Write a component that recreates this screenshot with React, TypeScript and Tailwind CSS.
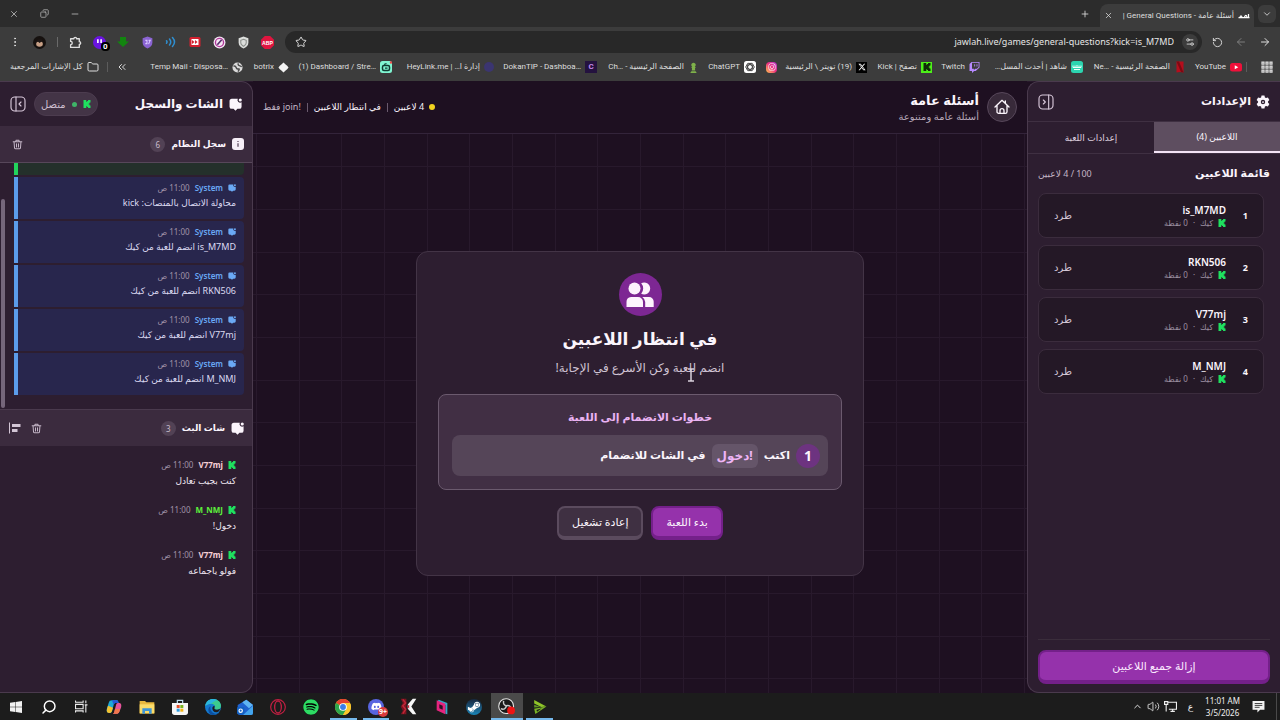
import React from 'react';
import {
  ArrowLeft,
  ArrowRight,
  ChevronDown,
  ChevronUp,
  ChevronsLeft,
  Copy,
  EllipsisVertical,
  Folder,
  Minus,
  Plus,
  RotateCcw,
  Search,
  Settings2,
  Star,
  Volume2,
  X,
} from 'lucide-react';
import { FaDiscord, FaInstagram, FaSpotify, FaSteamSymbol, FaTwitch, FaXTwitter, FaChessPawn } from 'react-icons/fa6';

type IconProps = { className?: string };

const KickIcon = ({ className = 'size-2 text-[#1fe05f]' }: IconProps) => (
  <svg viewBox="0 0 16 16" className={`shrink-0 ${className}`} fill="currentColor" aria-hidden="true">
    <path d="M1 0h5.500v3.500h1.700V1.800h1.900V0H15v5h-1.800v1.800h-1.700v2.400h1.700V11H15v5h-4.900v-1.800H8.200v-1.700H6.500V16H1z" />
  </svg>
);

const ChatIcon = ({ className = 'size-[13px]' }: IconProps) => (
  <svg viewBox="0 0 24 24" className={`shrink-0 ${className}`} fill="currentColor" aria-hidden="true">
    <path d="M6 1.500h10.200a5 5 0 0 0 7 6.500V16a4 4 0 0 1-4 4h-3.600L12 23.600 8.400 20H5a4 4 0 0 1-4-4V5.500a4 4 0 0 1 5-4z" />
    <circle cx="20.800" cy="3.600" r="2.900" />
  </svg>
);

const TrashIcon = ({ className = 'size-[11px]' }: IconProps) => (
  <svg viewBox="0 0 24 24" className={`shrink-0 ${className}`} fill="none" stroke="currentColor" strokeWidth="2.200" strokeLinecap="round" aria-hidden="true">
    <path d="M2.500 6h19M8 5.500 9.200 2.500h5.600L16 5.500M4.500 6.500l1 13a2.500 2.500 0 0 0 2.500 2h8a2.500 2.500 0 0 0 2.500-2l1-13M9.800 10.500v7M14.200 10.500v7" />
  </svg>
);

const PanelIcon = ({ open }: { open: 'left' | 'right' }) => (
  <svg viewBox="0 0 24 24" className="size-4" fill="none" stroke="currentColor" strokeWidth="1.700" strokeLinecap="round" strokeLinejoin="round" aria-hidden="true">
    <rect x="1.500" y="1.500" width="21" height="21" rx="5.500" />
    {open === 'right' ? <path d="M16 1.500v21M8 9l3 3-3 3" /> : <path d="M9 1.500v21M16.500 9l-3 3 3 3" />}
  </svg>
);

const GearIcon = () => (
  <svg viewBox="0 0 24 24" className="size-[14px]" fill="currentColor" fillRule="evenodd" aria-hidden="true">
    <path d="M9.500 1h5l.8 3.200 1.900 1.100 3.200-.9 2.500 4.300L20.500 11v2l2.400 2.300-2.500 4.300-3.200-.9-1.900 1.100-.8 3.200h-5l-.8-3.200-1.900-1.100-3.200.9-2.500-4.300L3.500 13v-2L1.100 8.700l2.500-4.300 3.200.9 1.900-1.100zM12 8.200a3.800 3.800 0 1 0 0 7.600 3.800 3.800 0 0 0 0-7.600z" />
    <circle cx="12" cy="12" r="1.500" />
  </svg>
);

const HomeIcon = () => (
  <svg viewBox="0 0 24 24" className="size-4" fill="none" stroke="currentColor" strokeWidth="2" strokeLinecap="round" strokeLinejoin="round" aria-hidden="true">
    <path d="M1.500 12 12 2l10.500 10M4.500 9.500V19A2.500 2.500 0 0 0 7 21.500h10a2.500 2.500 0 0 0 2.500-2.500V9.500M17 3v3M9 21v-3.500a3 3 0 0 1 6 0V21" />
  </svg>
);

const UsersIcon = () => (
  <svg viewBox="0 0 28 26" className="h-[26px] w-7" fill="#fdf3fd" aria-hidden="true">
    <circle cx="8.500" cy="6.500" r="6" />
    <path d="M15.200 1.300a6 6 0 1 1 0 10.400 7.800 7.800 0 0 0 0-10.400z" />
    <path d="M5 15h7a5 5 0 0 1 5 5v5H.5v-5A5 5 0 0 1 5 15zM16.300 15H23a4.700 4.700 0 0 1 4.700 5v5h-8.500v-5a7 7 0 0 0-2.900-5z" />
  </svg>
);

const extensions = [
  {
    name: 'ABP',
    icon: (
      <svg viewBox="0 0 24 24" className="size-[13px]">
        <path d="M7 0h10l7 7v10l-7 7H7l-7-7V7z" fill="#e0153f" />
        <text x="12" y="16" textAnchor="middle" fontSize="9.500" fontWeight="700" fill="#fff" fontFamily="Liberation Sans">ABP</text>
      </svg>
    ),
  },
  {
    name: 'Shield',
    icon: (
      <svg viewBox="0 0 24 24" className="size-[13px]">
        <path d="M12 1l9 3v8c0 6-4 9-9 11-5-2-9-5-9-11V4z" fill="#dcdedc" />
        <path d="M12 6l5 2v5c0 3-2 4-5 6-3-2-5-3-5-6V8z" fill="none" stroke="#8b8f8b" strokeWidth="2" />
      </svg>
    ),
  },
  {
    name: 'Blocker',
    icon: (
      <svg viewBox="0 0 24 24" className="size-[13px]">
        <circle cx="12" cy="12" r="11" fill="#f4e6f4" />
        <circle cx="12" cy="12" r="7.500" fill="none" stroke="#b03a9a" strokeWidth="2.500" />
        <path d="M8 16l8-9" stroke="#53306b" strokeWidth="3" />
      </svg>
    ),
  },
  {
    name: 'Speed',
    icon: (
      <svg viewBox="0 0 24 24" className="size-[12px]">
        <rect x="1" y="2" width="22" height="20" rx="3" fill="#d3202f" />
        <path d="M5 6h14v12H5z" fill="#fff" />
        <path d="M6 8l5 4-5 4zM12 8l5 4-5 4z" fill="#d3202f" />
      </svg>
    ),
  },
  {
    name: 'Sound',
    icon: (
      <svg viewBox="0 0 24 24" className="size-[12px]" fill="none" stroke="#2f8fd0" strokeWidth="3" strokeLinecap="round">
        <path d="M3 9.500q2 2.500 0 5M9 6q5 6 0 12M15 3q8 9 0 18" />
      </svg>
    ),
  },
  {
    name: 'Privacy',
    icon: (
      <svg viewBox="0 0 24 24" className="size-[13px]">
        <path d="M12 1l9 3v8c0 6-4 9-9 11-5-2-9-5-9-11V4z" fill="#8a63d2" />
        <path d="M8 8h3v6H8M14 8h3l-3 7" fill="none" stroke="#d9c9ff" strokeWidth="2" />
      </svg>
    ),
  },
  {
    name: 'Downloader',
    icon: (
      <svg viewBox="0 0 24 24" className="size-[12px]" fill="#12850f">
        <path d="M6 2h12v9h6L12 22 0 11h6z" />
      </svg>
    ),
  },
  {
    name: 'Twitch tools',
    icon: (
      <span className="relative flex">
        <svg viewBox="0 0 24 24" className="size-[13px]">
          <circle cx="12" cy="12" r="12" fill="#6a14e0" />
          <path d="M9 6v7M15 6v7" stroke="#fff" strokeWidth="3" />
        </svg>
        <span className="absolute -right-1 top-1.5 rounded-sm bg-black px-[2px] text-[8px] leading-[9px] font-bold text-white">0</span>
      </span>
    ),
  },
  {
    name: 'Extensions',
    icon: (
      <svg viewBox="0 0 24 24" className="size-[13px]" fill="none" stroke="currentColor" strokeWidth="2.500" strokeLinejoin="round">
        <path d="M3 5h6a2.500 2.500 0 0 1 5 0h5v5.500a2.500 2.500 0 0 1 0 5V21H3v-5a3 3 0 0 0 0-6z" />
      </svg>
    ),
  },
];

const bookmarks = [
  {
    label: 'YouTube',
    dir: 'ltr',
    width: 'w-[48px]',
    icon: (
      <svg viewBox="0 0 24 24" className="size-3">
        <rect x="0" y="4" width="24" height="17" rx="5" fill="#f0103a" />
        <path d="M9.500 8.500l7 4-7 4z" fill="#fff" />
      </svg>
    ),
  },
  {
    label: 'الصفحة الرئيسية - Ne…\u200e',
    dir: 'rtl',
    width: 'w-[95px]',
    icon: (
      <svg viewBox="0 0 24 24" className="size-3">
        <path d="M5 1h14v22l-7-1-7 1z" fill="#b50d1c" />
        <path d="M5 1h5l9 22-5-1z" fill="#7d0912" />
      </svg>
    ),
  },
  {
    label: 'شاهد | أحدث المسل…',
    dir: 'rtl',
    width: 'w-[95px]',
    icon: (
      <svg viewBox="0 0 24 24" className="size-3">
        <rect width="24" height="24" rx="5" fill="#2cd5b0" />
        <path d="M4 9v4h16V9M8 9v4M12 8v5M16 9v4M6 17h12" fill="none" stroke="#eafff8" strokeWidth="2" />
      </svg>
    ),
  },
  { label: 'Twitch', dir: 'ltr', width: 'w-[40px]', icon: <FaTwitch className="size-[11px] text-[#b78aff]" /> },
  {
    label: 'تصفح | Kick',
    dir: 'rtl',
    width: 'w-[57px]',
    icon: (
      <span className="flex size-[11px] items-center justify-center bg-[#4df019]">
        <KickIcon className="size-2 text-[#102a08]" />
      </span>
    ),
  },
  {
    label: '(19) تويتر \\ الرئيسية',
    dir: 'rtl',
    width: 'w-[82px]',
    icon: (
      <span className="flex size-[11px] items-center justify-center bg-black">
        <FaXTwitter className="size-2 text-white" />
      </span>
    ),
  },
  {
    label: '',
    dir: 'ltr',
    width: 'w-[13px]',
    icon: (
      <span className="flex size-[11px] items-center justify-center rounded-sm bg-linear-to-tr from-[#fdbf3b] via-[#ee2a7b] to-[#b42bd0]">
        <FaInstagram className="size-2 text-white" />
      </span>
    ),
  },
  {
    label: 'ChatGPT',
    dir: 'ltr',
    width: 'w-[49px]',
    icon: (
      <svg viewBox="0 0 24 24" className="size-3">
        <rect width="24" height="24" rx="5" fill="#fff" />
        <g fill="none" stroke="#222" strokeWidth="1.500">
          <ellipse cx="12" cy="12" rx="8.500" ry="4.500" />
          <ellipse cx="12" cy="12" rx="8.500" ry="4.500" transform="rotate(60 12 12)" />
          <ellipse cx="12" cy="12" rx="8.500" ry="4.500" transform="rotate(120 12 12)" />
        </g>
      </svg>
    ),
  },
  {
    label: 'الصفحة الرئيسية - Ch…\u200e',
    dir: 'rtl',
    width: 'w-[94px]',
    icon: <FaChessPawn className="size-[11px] text-[#7fb24a]" />,
  },
  {
    label: 'DokanTIP - Dashboa…',
    dir: 'ltr',
    width: 'w-[95px]',
    icon: (
      <span className="flex size-3 items-center justify-center bg-[#24123f] text-[8px] leading-none font-bold text-[#c68bf0]">C</span>
    ),
  },
  {
    label: 'HeyLink.me | إدارة ا…\u200f',
    dir: 'ltr',
    width: 'w-[94px]',
    icon: <span className="size-[10px] rounded-full bg-[#3b3570]" />,
  },
  {
    label: '(1) Dashboard / Stre…',
    dir: 'ltr',
    width: 'w-[95px]',
    icon: (
      <svg viewBox="0 0 24 24" className="size-3">
        <rect width="24" height="24" rx="5" fill="#80f5d2" />
        <rect x="5" y="9" width="14" height="10" rx="3" fill="none" stroke="#0f3d33" strokeWidth="3" />
        <path d="M8 7l5-2M10 14h5" stroke="#0f3d33" strokeWidth="2.500" />
        <circle cx="22" cy="3" r="2.500" fill="#f04a4a" />
      </svg>
    ),
  },
  {
    label: 'botrix',
    dir: 'ltr',
    width: 'w-[38px]',
    icon: (
      <svg viewBox="0 0 24 24" className="size-[11px]" fill="#f4f4f4">
        <path d="M12 1l4 4 4 3 3 4-3 4-4 3-4 4-4-4-4-3-3-4 3-4 4-3z" />
      </svg>
    ),
  },
  {
    label: 'Temp Mail - Disposa…',
    dir: 'ltr',
    width: 'w-[94px]',
    icon: (
      <svg viewBox="0 0 24 24" className="size-[11px]">
        <circle cx="12" cy="12" r="11" fill="#dadada" />
        <path d="M3 9q5-1 6 3t5 3-1 6M14 3q-2 4 2 5t5 3" fill="none" stroke="#4a4a4a" strokeWidth="3" />
      </svg>
    ),
  },
];

const players = [
  { id: 1, name: 'is_M7MD' },
  { id: 2, name: 'RKN506' },
  { id: 3, name: 'V77mj' },
  { id: 4, name: 'M_NMJ' },
];

const systemLog = [
  'محاولة الاتصال بالمنصات: kick',
  'is_M7MD انضم للعبة من كيك',
  'RKN506 انضم للعبة من كيك',
  'V77mj انضم للعبة من كيك',
  'M_NMJ انضم للعبة من كيك',
];

const chat = [
  { name: 'V77mj', color: 'text-[#f6cfd6]', text: 'كنت بجيب تعادل' },
  { name: 'M_NMJ', color: 'text-[#5df03c]', text: 'دخول!' },
  { name: 'V77mj', color: 'text-[#f6cfd6]', text: 'فولو ياجماعه' },
];

const taskbarApps = [
  {
    name: 'Start',
    icon: (
      <svg viewBox="0 0 24 24" className="size-3" fill="#f2f2f2">
        <path d="M0 3.500 10.500 2v9.500H0zM11.500 1.800 24 0v11.500H11.500zM0 12.500h10.500V22L0 20.500zM11.500 12.500H24V24l-12.500-1.800z" />
      </svg>
    ),
  },
  { name: 'Search', icon: <Search className="size-4 -scale-x-100 text-white" strokeWidth={2.2} /> },
  {
    name: 'Task view',
    icon: (
      <svg viewBox="0 0 24 24" className="size-[13px]" fill="none" stroke="#ededed" strokeWidth="2">
        <path d="M1 1v3h14V1M1 23v-3h14v3M1 8h14v8H1zM20 1v5M20 10v13M18 9h5" />
      </svg>
    ),
  },
  {
    name: 'Copilot',
    icon: (
      <svg viewBox="0 0 24 24" className="size-4">
        <path d="M9 2h7c2 0 2 1 3 4h-4c-2 0-3 1-3.500 3L9 18c-1 3-2 3-4 3-4 0-4.500-3-3.500-7L4 6c1-3 2-4 5-4z" fill="#1ea8d8" />
        <path d="M3 10 1.500 15c-1 4 0 6 3.500 6 2 0 3-.5 4-3l1.500-5z" fill="#f2c230" />
        <path d="M15 22H9c2 0 3-1 3.500-3L15 9c1-3 2-3 4-3 4 0 4.500 3 3.500 7L20 19c-1 2-2 3-5 3z" fill="#e5549a" />
        <path d="M9 2h7c2 0 2 1 3 4h-4c-2 0-3 1-3.500 3z" fill="#2657d8" />
        <path d="M15 22H9c2 0 3-1 3.500-3l1-4h7.500l-1 4c-1 2-2 3-5 3z" fill="#f0784a" />
      </svg>
    ),
  },
  {
    name: 'File Explorer',
    icon: (
      <svg viewBox="0 0 24 24" className="size-4">
        <path d="M1 3h8l2 2h12v17H1z" fill="#e9b93f" />
        <path d="M1 8h22v13H1z" fill="#fbdc6a" />
        <path d="M5 14h14v8h-4v-4H9v4H5z" fill="#3f95d6" />
      </svg>
    ),
  },
  {
    name: 'Store',
    icon: (
      <svg viewBox="0 0 24 24" className="size-4">
        <path d="M8 6V2h8v4" fill="none" stroke="#bfe0f2" strokeWidth="1.800" />
        <path d="M0 6h24v14a4 4 0 0 1-4 4H4a4 4 0 0 1-4-4z" fill="#f5f5f5" />
        <path d="M7 9h4.500v4.500H7z" fill="#e3502c" />
        <path d="M12.500 9H17v4.500h-4.500z" fill="#78b41f" />
        <path d="M7 14.500h4.500V19H7z" fill="#2a9be0" />
        <path d="M12.500 14.500H17V19h-4.500z" fill="#f3b313" />
      </svg>
    ),
  },
  {
    name: 'Edge',
    icon: (
      <svg viewBox="0 0 24 24" className="size-4">
        <circle cx="12" cy="12" r="12" fill="#1479cf" />
        <path d="M.5 10C2 3 7 0 12 0c7 0 12 5 12 10 0 4-3 6-6 6-3 0-4-1-4-2s1-1.500 1-3-2-4-6-4-7 2-8.500 3z" fill="#3ccb8e" />
        <path d="M.5 10C2 3 7 0 12 0c3 0 5 1 7 2-4 0-5 2-10 5-4 0-7 2-8.500 3z" fill="#2bb5e0" />
        <path d="M8 13c0 5 4 9 9 9 2 0 4-1 5-2-2 3-6 4-10 4C6 23 5 18 5 16c0-3 2-5 4-6-1 1-1 2-1 3z" fill="#0c4fa0" />
        <path d="M14 14c0 1 1 2 4 2 2 0 4-.5 5-2-1 4-3 6-6 6-4 0-6-3-6-6 0-2 1-3 3-4 1 2 0 3 0 4z" fill="#1d1d1f" />
      </svg>
    ),
  },
  {
    name: 'Mail',
    icon: (
      <svg viewBox="0 0 24 24" className="size-4">
        <path d="M1 9 14 1l10 8v12a3 3 0 0 1-3 3H4a3 3 0 0 1-3-3z" fill="#1f62cf" />
        <path d="M8 5l6-4 10 8-6 5z" fill="#5fb4f2" />
        <path d="M24 10v11a3 3 0 0 1-3 3H9z" fill="#43a5ee" />
        <rect x="0" y="12" width="11" height="11" rx="2" fill="#1261c2" />
        <circle cx="5.500" cy="17.500" r="2.500" fill="none" stroke="#fff" strokeWidth="1.800" />
      </svg>
    ),
  },
  {
    name: 'Opera GX',
    icon: (
      <svg viewBox="0 0 24 24" className="size-4" fill="none" stroke="#c01f42">
        <circle cx="12" cy="12" r="11" strokeWidth="1.800" />
        <ellipse cx="12" cy="12" rx="5" ry="9" strokeWidth="2" />
      </svg>
    ),
  },
  {
    name: 'Spotify',
    icon: (
      <span className="flex rounded-full bg-black">
        <FaSpotify className="size-4 text-[#2ddb63]" />
      </span>
    ),
  },
  {
    name: 'Chrome',
    running: true,
    icon: (
      <svg viewBox="0 0 24 24" className="size-4">
        <circle cx="12" cy="12" r="12" fill="#fbc62c" />
        <path d="M12 12 1.600 6A12 12 0 0 1 22.400 6z" fill="#e5402f" />
        <path d="M12 12 1.600 6A12 12 0 0 0 12 24l5.200-9z" fill="#2da64c" />
        <path d="M12 6h10.400A12 12 0 0 1 12 24l5.200-9z" fill="#fbc62c" />
        <circle cx="12" cy="12" r="5.800" fill="#fff" />
        <circle cx="12" cy="12" r="4.400" fill="#3b7de8" />
      </svg>
    ),
  },
  {
    name: 'Discord',
    running: true,
    icon: (
      <span className="relative flex size-4 items-center justify-center rounded-full bg-[#5865e0]">
        <FaDiscord className="size-[11px] text-white" />
        <span className="absolute -right-1 -bottom-0.5 size-[10px] rounded-full bg-[#d93a3e] text-center text-[7px] leading-[10px] font-bold text-white">9+</span>
      </span>
    ),
  },
  {
    name: 'Capture',
    icon: (
      <svg viewBox="0 0 24 24" className="size-[17px]">
        <path d="M1 1h8v22H1l3-5-3-6 3-5z" fill="#7c1420" />
        <path d="M4 2l4 5-4 4 4 5-4 6" fill="none" stroke="#c22738" strokeWidth="2" />
        <path d="M11 9 18 1h5l-7 11 7 11h-5l-7-8z" fill="#f6f6f6" />
        <path d="M10 12l3-3v6z" fill="#c22738" />
      </svg>
    ),
  },
  {
    name: 'Parsec',
    icon: (
      <svg viewBox="0 0 24 24" className="size-4">
        <path d="M7 1l13 5v17l-3-1V9L5 4z" fill="#38a7c9" />
        <path d="M4 2l13 5v16L4 17z" fill="#e5247e" />
        <path d="M8 8l5 2v6l-5-2z" fill="#2a1025" />
      </svg>
    ),
  },
  {
    name: 'Steam',
    icon: (
      <span className="flex size-4 items-center justify-center rounded-full bg-linear-to-b from-[#15283f] to-[#1585b8]">
        <FaSteamSymbol className="size-[14px] text-white" />
      </span>
    ),
  },
  {
    name: 'OBS Studio',
    running: true,
    active: true,
    icon: (
      <svg viewBox="0 0 24 24" className="size-[17px]">
        <circle cx="11.500" cy="11.500" r="10.500" fill="#1a1a1a" stroke="#e4e4e4" strokeWidth="1.500" />
        <path d="M8 4c-1 4 1 7 4 7 3-1 6 0 6 4M12 11c-1 4-4 6-8 4" fill="none" stroke="#c9c9c9" strokeWidth="2" />
        <circle cx="18.500" cy="17.500" r="5.500" fill="#ee1414" />
      </svg>
    ),
  },
  {
    name: 'Player',
    running: true,
    icon: (
      <svg viewBox="0 0 24 24" className="size-[14px]">
        <path d="M2 0l21 11-9 1L2 6z" fill="#8fc529" />
        <path d="M2 8l11 4-11 1z" fill="#5e9a20" />
        <path d="M2 15l21-4L4 24z" fill="#7ab526" />
        <path d="M6 17l9-3-8 6z" fill="#1c1c1c" />
      </svg>
    ),
  },
];

const MessageHead = ({ children }: { children: React.ReactNode }) => (
  <div className="flex h-[14px] items-center gap-[5px] text-[8px]">
    {children}
    <time className="text-[#a193a8]">11:00 ص</time>
  </div>
);

const BrowserChrome = () => (
  <div className="shrink-0 bg-[#3c3c3c] font-['Roboto','DejaVu_Sans',sans-serif] text-[#dedede]">
    <div className="flex h-[27px] items-end bg-[#2c2c2c]">
      <div className="flex h-full items-center px-1">
        <button aria-label="Search tabs" className="flex size-[18px] items-center justify-center rounded-md bg-[#3c3c3c]">
          <ChevronDown className="size-[10px]" />
        </button>
      </div>
      <div className="flex h-[23px] w-[154px] items-center gap-1 rounded-t-lg bg-[#3c3c3c] px-1">
        <svg viewBox="0 0 24 12" className="h-1.5 w-3" fill="none" stroke="#fff" strokeWidth="2.500" aria-hidden="true">
          <path d="M1 9h22M4 8q2-5 4 0M13 8q3-7 5 0M21 2v7" />
        </svg>
        <span className="flex-1 text-[8px] whitespace-nowrap">أسئلة عامة - General Questions |</span>
        <button aria-label="Close tab">
          <X className="size-[9px]" />
        </button>
      </div>
      <button aria-label="New tab" className="flex h-full items-center px-2.5">
        <Plus className="size-[10px]" />
      </button>
      <div className="mr-auto flex h-full items-center gap-[21px] px-[9px] text-[#b9b9b9]">
        <button aria-label="Minimize"><Minus className="size-[10px]" /></button>
        <button aria-label="Restore"><Copy className="size-[9px] -scale-x-100" /></button>
        <button aria-label="Close"><X className="size-[10px]" /></button>
      </div>
    </div>

    <div className="flex h-[30px] items-center px-[9px]">
      <div className="flex items-center gap-3">
        <button aria-label="Back"><ArrowRight className="size-3" /></button>
        <button aria-label="Forward" className="text-[#7c7c7c]"><ArrowLeft className="size-3" /></button>
        <button aria-label="Reload"><RotateCcw className="size-[11px]" /></button>
      </div>
      <div className="mr-[10px] flex h-[22px] flex-1 items-center gap-1 rounded-full bg-[#282828] pr-1 pl-[10px]">
        <span className="flex size-4 items-center justify-center rounded-full bg-[#3c3c3c]">
          <Settings2 className="size-[10px]" />
        </span>
        <input
          dir="ltr"
          aria-label="Address"
          defaultValue="jawlah.live/games/general-questions?kick=is_M7MD"
          className="min-w-0 flex-1 bg-transparent px-1 text-right font-['Noto_Sans',sans-serif] text-[9px] text-[#e6e6e6] outline-none"
        />
        <button aria-label="Bookmark this page"><Star className="size-3" /></button>
      </div>
      <div className="flex items-center pr-1.5">
        {extensions.map((ext) => (
          <button key={ext.name} aria-label={ext.name} className="flex w-6 justify-center">
            {ext.icon}
          </button>
        ))}
      </div>
      <span className="mx-[5px] h-[10px] w-px bg-[#6a6a6a]" />
      <button aria-label="Profile" className="mx-1.5">
        <svg viewBox="0 0 24 24" className="size-[13px]">
          <circle cx="12" cy="12" r="12" fill="#16110f" />
          <path d="M6 12q6-6 12 0v5q-6 6-12 0z" fill="#c79f85" />
          <path d="M5 13q0-6 7-7t7 7l-3-3-4 3-3-3z" fill="#1d1614" />
        </svg>
      </button>
      <button aria-label="Menu" className="mr-1.5"><EllipsisVertical className="size-3" /></button>
    </div>

    <nav className="flex h-6 items-center pr-[7px] pb-1 pl-[10px] text-[8px]">
      <svg viewBox="0 0 24 24" className="size-3 shrink-0" fill="none" stroke="currentColor" strokeWidth="2.500" aria-hidden="true">
        <path d="M2 2h4v4H2zM10 2h4v4h-4zM18 2h4v4h-4zM2 10h4v4H2zM10 10h4v4h-4zM18 10h4v4h-4zM2 18h4v4H2zM10 18h4v4h-4zM18 18h4v4h-4z" />
      </svg>
      <span className="mr-[14px] ml-1 h-[10px] w-px bg-[#5c5c5c]" />
      <div className="flex gap-2">
        {bookmarks.map((b) => (
          <a key={b.label} href="#" aria-label={b.label || 'Instagram'} className={`flex items-center gap-1 ${b.width}`}>
            <span className="flex shrink-0">{b.icon}</span>
            {b.label && <span dir={b.dir} className="whitespace-nowrap">{b.label}</span>}
          </a>
        ))}
      </div>
      <div className="mr-auto flex items-center">
        <button aria-label="More bookmarks"><ChevronsLeft className="size-3" /></button>
        <span className="mx-2 h-[10px] w-px bg-[#5c5c5c]" />
        <a href="#" className="flex items-center gap-1 whitespace-nowrap">
          <Folder className="size-3" />
          كل الإشارات المرجعية
        </a>
      </div>
    </nav>
  </div>
);

const SettingsPanel = () => (
  <aside className="flex w-[253px] shrink-0 flex-col rounded-l-xl border border-r-0 border-[#4a3a4d] bg-[#2d1e30]">
    <div className="flex h-10 items-center justify-between border-b border-[#3f3042] px-[10px]">
      <h2 className="flex items-center gap-[5px] text-[11px] font-bold">
        <GearIcon />
        الإعدادات
      </h2>
      <button aria-label="طي الإعدادات" className="text-[#d8c8da]"><PanelIcon open="right" /></button>
    </div>
    <div role="tablist" className="grid h-8 grid-cols-2 border-b border-[#3f3042] text-[9px]">
      <button role="tab" aria-selected="true" className="border-b-2 border-[#f3e3f5] bg-[#5e4e60]">اللاعبين (4)</button>
      <button role="tab" aria-selected="false" className="text-[#dccfde]">إعدادات اللعبة</button>
    </div>
    <div className="flex h-[39px] shrink-0 items-center justify-between px-[10px]">
      <h3 className="text-[11px] font-bold">قائمة اللاعبين</h3>
      <span className="text-[9px] text-[#c3b5c6]">100 / 4 لاعبين</span>
    </div>
    <ul className="flex flex-1 flex-col gap-[7px] pr-4 pl-[10px]">
      {players.map((p) => (
        <li key={p.id} className="flex h-[45px] items-center rounded-lg border border-[#3b2c3d] bg-[#241826] px-[15px]">
          <span className="w-[22px] text-[9px] font-bold">{p.id}</span>
          <div>
            <div className="text-[10px] leading-[14px] font-semibold">{p.name}</div>
            <div className="flex items-center gap-[5px] text-[8px] leading-3 text-[#9d8fa1]">
              <KickIcon />
              <span>كيك</span>
              <span>·</span>
              <span>0 نقطة</span>
            </div>
          </div>
          <button className="mr-auto text-[10px] text-[#d3c6d6]">طرد</button>
        </li>
      ))}
    </ul>
    <div className="mx-[10px] border-t border-[#3a2d3b] pt-[10px] pb-2">
      <button className="h-[34px] w-full rounded-lg border-2 border-b-4 border-[#74208a] bg-[#9532ab] text-[11px] text-[#fbe9ff]">
        إزالة جميع اللاعبين
      </button>
    </div>
  </aside>
);

const GameArea = () => (
  <main className="flex min-w-0 flex-1 flex-col">
    <header className="flex h-[53px] shrink-0 items-center justify-between border-b border-[#33243a] bg-[#1e1021] px-[10px]">
      <div className="flex items-center gap-2">
        <button aria-label="الرئيسية" className="flex size-[30px] items-center justify-center rounded-full border border-[#57475a] bg-[#382a3a]">
          <HomeIcon />
        </button>
        <div>
          <h1 className="text-[13px] leading-[18px] font-bold">أسئلة عامة</h1>
          <p className="text-[10px] leading-[14px] text-[#b7a9ba]">أسئلة عامة ومتنوعة</p>
        </div>
      </div>
      <div className="flex items-center gap-[5px] text-[9px]">
        <span className="size-1.5 rounded-full bg-[#f2d21f]" />
        <span>4 لاعبين</span>
        <span className="mx-px h-[9px] w-px bg-[#6a5a6e]" />
        <span>في انتظار اللاعبين</span>
        <span className="mx-px h-[9px] w-px bg-[#6a5a6e]" />
        <span className="text-[#c5b8c8]">!join فقط</span>
      </div>
    </header>
    <div className="flex flex-1 items-center justify-center">
      <section className="relative flex w-[448px] flex-col items-center rounded-xl border border-[#433446] bg-[#2d1e30] px-[21px] pt-[21px] pb-[35px]">
        <div className="flex size-[43px] items-center justify-center rounded-full bg-[#7d2793]">
          <UsersIcon />
        </div>
        <h2 className="mt-2 text-[17px] leading-[30px] font-bold">في انتظار اللاعبين</h2>
        <p className="mt-1 text-[12px] leading-5 text-[#d0c3d3]">انضم للعبة وكن الأسرع في الإجابة!</p>
        <svg viewBox="0 0 8 14" className="absolute top-[116px] left-[270px] h-[14px] w-2" fill="none" stroke="#d8d0da" strokeWidth="1.500" aria-hidden="true">
          <path d="M1 1h2.500L4 2l.5-1H7M1 13h2.500l.5-1 .5 1H7M4 2v10" />
        </svg>
        <div className="mt-4 w-full rounded-lg border border-[#6b5a6e] bg-[#412f44] px-[13px] pt-3 pb-[13px]">
          <h3 className="text-center text-[11px] leading-5 font-semibold text-[#eab3f2]">خطوات الانضمام إلى اللعبة</h3>
          <div className="mt-2 flex h-[41px] items-center gap-1.5 rounded-lg bg-[#554558] px-2 text-[11px] font-semibold">
            <span className="flex size-6 items-center justify-center rounded-full bg-[#6d3380] text-[14px] font-bold">1</span>
            <span>اكتب</span>
            <code className="rounded-md bg-[#655569] px-[5px] font-[inherit] text-[12px] leading-6 font-bold text-[#eeb4f6]">!دخول</code>
            <span>في الشات للانضمام</span>
          </div>
        </div>
        <div className="mt-4 flex gap-2">
          <button className="h-[34px] rounded-lg border-2 border-b-4 border-[#74208a] bg-[#9532ab] px-[13px] text-[11px]">بدء اللعبة</button>
          <button className="h-[34px] rounded-lg border-2 border-b-4 border-[#5b4b5e] bg-[#3f3042] px-[13px] text-[11px]">إعادة تشغيل</button>
        </div>
      </section>
    </div>
  </main>
);

const ChatPanel = () => (
  <aside className="flex w-[253px] shrink-0 flex-col overflow-hidden rounded-r-xl border border-l-0 border-[#4a3a4d] bg-[#2d1e30]">
    <div className="flex h-11 shrink-0 items-center justify-between px-[10px]">
      <h2 className="flex items-center gap-1.5 text-[12px] font-bold">
        <ChatIcon />
        الشات والسجل
      </h2>
      <div className="flex items-center gap-2">
        <span className="flex h-6 items-center gap-1.5 rounded-full border border-[#4c3c4f] bg-[#433446] px-1.5 text-[10px] text-[#cdbfd0]">
          <KickIcon />
          <span className="size-[5px] rounded-full bg-[#3fb468]" />
          متصل
        </span>
        <button aria-label="طي الشات" className="text-[#d8c8da]"><PanelIcon open="left" /></button>
      </div>
    </div>
    <div className="flex h-[37px] shrink-0 items-center gap-1.5 border-b border-[#57475a] bg-[#3b2b3e] pr-2 pl-3">
      <svg viewBox="0 0 24 24" className="size-3" aria-hidden="true">
        <rect width="24" height="24" rx="6" fill="#f7f0f8" />
        <path d="M12 10.500v7M12 6v2" stroke="#5a475d" strokeWidth="2.500" />
      </svg>
      <h3 className="text-[9px] font-bold">سجل النظام</h3>
      <span className="size-[15px] rounded-full bg-[#524255] text-center text-[8px] leading-[15px] text-[#c8bbcb]">6</span>
      <button aria-label="مسح السجل" className="mr-auto text-[#c5b7c8]"><TrashIcon /></button>
    </div>
    <div className="relative flex h-[246px] shrink-0 flex-col gap-[2px] overflow-hidden pr-2 pb-[14px] pl-[14px]">
      <div className="min-h-0 flex-1 rounded-br border-l-4 border-[#22d35c] bg-[#24302b]" />
      {systemLog.map((text) => (
        <div key={text} className="h-[42px] shrink-0 rounded-r border-l-4 border-[#5b9cea] bg-[#28264d] px-2 pt-1">
          <MessageHead>
            <ChatIcon className="size-2 text-[#6aa9f5]" />
            <span className="font-semibold text-[#6aa9f5]">System</span>
          </MessageHead>
          <p className="text-[9px] leading-4 text-[#dcdaf2]">{text}</p>
        </div>
      ))}
      <div className="absolute top-9 left-px h-[209px] w-1 rounded-full bg-[#75667a]" />
    </div>
    <div className="flex h-[37px] shrink-0 items-center gap-1.5 border-t border-[#4a3a4d] bg-[#3b2b3e] pr-2 pl-[9px]">
      <ChatIcon />
      <h3 className="text-[9px] font-bold">شات البث</h3>
      <span className="size-[15px] rounded-full bg-[#524255] text-center text-[8px] leading-[15px] text-[#c8bbcb]">3</span>
      <button aria-label="مسح الشات" className="mr-auto text-[#c5b7c8]"><TrashIcon /></button>
      <button aria-label="محاذاة الشات" className="mr-1 text-[#d3c6d6]">
        <svg viewBox="0 0 24 24" className="size-3" fill="currentColor" aria-hidden="true">
          <path d="M0 1h2v22H0zM6 4h17v6H6zM6 14h11v6H6z" />
        </svg>
      </button>
    </div>
    <ul className="flex flex-col gap-[14px] px-4 pt-3">
      {chat.map((m, i) => (
        <li key={i}>
          <MessageHead>
            <KickIcon />
            <span className={`font-bold ${m.color}`}>{m.name}</span>
          </MessageHead>
          <p className="mt-px text-[9px] leading-4 text-[#efe6f1]">{m.text}</p>
        </li>
      ))}
    </ul>
  </aside>
);

const Taskbar = () => (
  <footer dir="ltr" className="flex h-[27px] shrink-0 items-center justify-between bg-[#1c1c1c] font-['Noto_Sans','DejaVu_Sans',sans-serif]">
    <div className="grid h-full w-[556px] grid-cols-17">
      {taskbarApps.map((app) => (
        <button
          key={app.name}
          aria-label={app.name}
          className={`relative flex items-center justify-center ${app.active ? 'bg-[#4a4a4a]' : ''}`}
        >
          {app.icon}
          {app.running && (
            <span className={`absolute bottom-0 h-0.5 bg-[#76b9ed] ${app.active ? 'inset-x-0' : 'inset-x-[3px]'}`} />
          )}
        </button>
      ))}
    </div>
    <div className="flex h-full items-center text-[9px] text-[#f0f0f0]">
      <ChevronUp className="mr-1 size-[11px]" />
      <Volume2 className="mr-1 size-[13px]" strokeWidth={1.5} />
      <svg viewBox="0 0 24 24" className="mr-[11px] size-[13px]" fill="none" stroke="currentColor" strokeWidth="2" aria-hidden="true">
        <path d="M8 4h15v13H9M12 21h8M16 17v4M1 3h6v5H1zM4 8v13" />
      </svg>
      <span className="mr-3">ع</span>
      <div className="mr-3 text-center text-[8px] leading-3">
        <div>11:01 AM</div>
        <div>3/5/2026</div>
      </div>
      <button aria-label="Notifications" className="mr-[11px]">
        <svg viewBox="0 0 24 24" className="size-[13px]" aria-hidden="true">
          <path d="M1 2h22v16h-8l-5 5v-5H1z" fill="#f2f2f2" />
          <path d="M5 6.500h14M5 10h14M5 13.500h9" stroke="#1c1c1c" strokeWidth="1.500" />
        </svg>
      </button>
      <span className="mr-[3px] h-full w-px bg-[#4a4a4a]" />
    </div>
  </footer>
);

const App: React.FC = () => {
  return (
    <div dir="rtl" className="flex h-screen flex-col overflow-hidden font-['Noto_Sans','DejaVu_Sans',sans-serif] text-[#fbf5fc]">
      <BrowserChrome />
      <div className="flex min-h-0 flex-1 bg-[#1e1021] bg-[linear-gradient(90deg,#28192c_1px,transparent_1px,transparent_43px,#28192c_43px,#28192c_44px,transparent_44px,transparent_85px,#28192c_85px,#28192c_86px,transparent_86px),linear-gradient(#28192c_1px,transparent_1px,transparent_43px,#28192c_43px,#28192c_44px,transparent_44px,transparent_85px,#28192c_85px,#28192c_86px,transparent_86px)] bg-[size:128px_128px]">
        <SettingsPanel />
        <GameArea />
        <ChatPanel />
      </div>
      <Taskbar />
    </div>
  );
};

export default App;
